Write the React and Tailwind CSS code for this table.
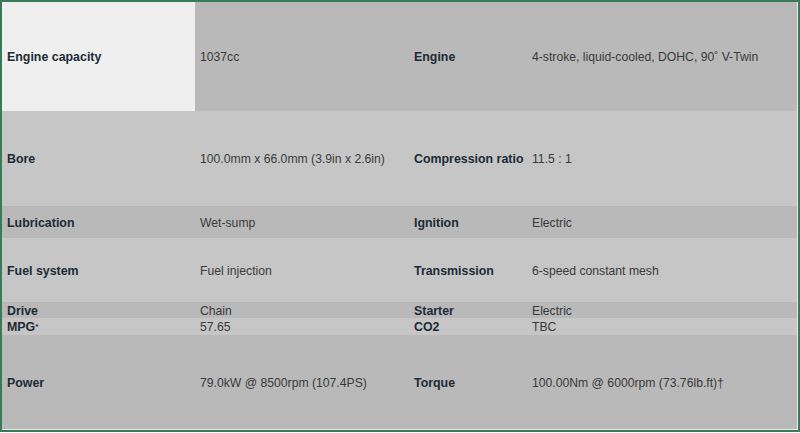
import React from "react";

const rows = [
  { h: "h-[109px]", bg: "bg-[#b9b9b9]", a: "Engine capacity", b: "1037cc", c: "Engine", d: "4-stroke, liquid-cooled, DOHC, 90˚ V-Twin", first: true },
  { h: "h-[95px]", bg: "bg-[#c6c6c6]", a: "Bore", b: "100.0mm x 66.0mm (3.9in x 2.6in)", c: "Compression ratio", d: "11.5 : 1" },
  { h: "h-[32px]", bg: "bg-[#b9b9b9]", a: "Lubrication", b: "Wet-sump", c: "Ignition", d: "Electric" },
  { h: "h-[64px]", bg: "bg-[#c6c6c6]", a: "Fuel system", b: "Fuel injection", c: "Transmission", d: "6-speed constant mesh" },
  { h: "h-[16px]", bg: "bg-[#b9b9b9]", a: "Drive", b: "Chain", c: "Starter", d: "Electric" },
  { h: "h-[17px]", bg: "bg-[#c6c6c6]", a: "MPG", sup: true, b: "57.65", c: "CO2", d: "TBC" },
  { h: "h-[94px]", bg: "bg-[#b9b9b9]", a: "Power", b: "79.0kW @ 8500rpm (107.4PS)", c: "Torque", d: "100.00Nm @ 6000rpm (73.76lb.ft)†" },
];

export default function App() {
  return (
    <div className="w-[800px] h-[433px] bg-white font-['Liberation_Sans',Arial,sans-serif]">
      <div className="w-[800px] h-[432px] border-2 border-[#3b7a57]">
        <div className="w-[796px] h-[428px] border-r border-b border-[#e4ebe6]">
          {rows.map((r, i) => (
            <div key={i} className={`flex items-stretch ${r.h} ${r.bg}`}>
              <div
                className={`w-[193px] flex items-center pl-[5px] pt-[2px] font-bold text-[12.4px] text-[#1d2b36] leading-none ${
                  r.first ? "bg-[#efefef]" : ""
                }`}
              >
                {r.a}
                {r.sup && <span className="text-[8px] self-start mt-[3px]">*</span>}
              </div>
              <div className="w-[214px] flex items-center pl-[5px] pt-[2px] text-[12.2px] text-[#3a3a3a] leading-none">
                {r.b}
              </div>
              <div className="w-[118px] flex items-center pl-[5px] pt-[2px] font-bold text-[12.4px] text-[#1d2b36] leading-none whitespace-nowrap">
                {r.c}
              </div>
              <div className="flex-1 flex items-center pl-[5px] pt-[2px] text-[12.2px] text-[#3a3a3a] leading-none">
                {r.d}
              </div>
            </div>
          ))}
        </div>
      </div>
    </div>
  );
}
